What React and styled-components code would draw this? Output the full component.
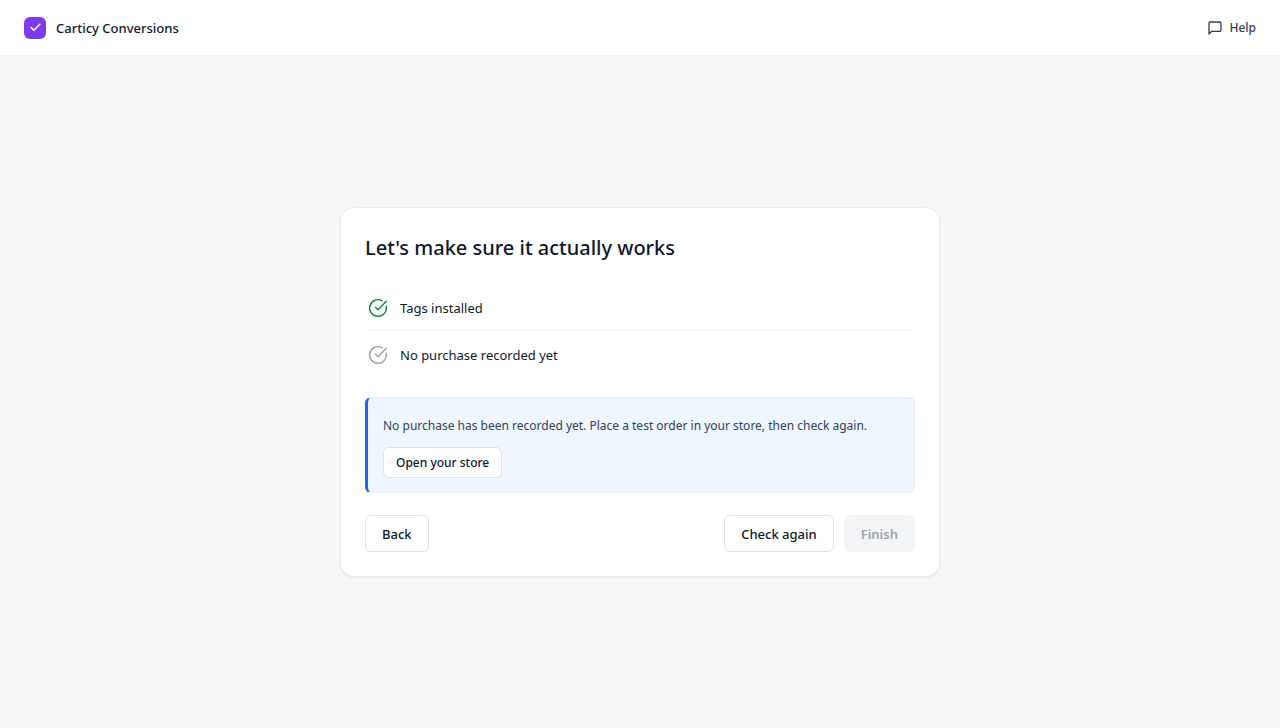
import React from 'react'
import styled, { createGlobalStyle } from 'styled-components'
import { Check, CircleCheckBig } from 'lucide-react'

const GlobalStyle = createGlobalStyle`
  * {
    box-sizing: border-box;
  }

  body {
    margin: 0;
    background: #f6f8f7;
    color: #0f172a;
    font-family: 'Segoe UI', 'Noto Sans', sans-serif;
    font-size: 13px;
  }
`

const Page = styled.div`
  display: flex;
  flex-direction: column;
  min-height: 100vh;
`

const Header = styled.header`
  display: flex;
  align-items: center;
  justify-content: space-between;
  height: 56px;
  padding: 0 24px;
  background: #fff;
  border-bottom: 1px solid #eff1f2;
`

const Brand = styled.div`
  display: flex;
  align-items: center;
  gap: 10px;
  font-size: 13px;
  font-weight: 500;
`

const Logo = styled.span`
  display: flex;
  align-items: center;
  justify-content: center;
  width: 22px;
  height: 22px;
  border-radius: 6px;
  background: #7c3aed;
  color: #fff;
`

const HelpLink = styled.a`
  display: flex;
  align-items: center;
  gap: 6px;
  color: #334155;
  font-size: 12px;
  font-weight: 500;
  text-decoration: none;
`

const Main = styled.main`
  display: flex;
  flex: 1;
  align-items: center;
  justify-content: center;
  padding: 24px;
`

const Card = styled.section`
  width: 100%;
  max-width: 600px;
  padding: 24px;
  background: #fff;
  border: 1px solid #eceeee;
  border-radius: 14px;
  box-shadow: 0 1px 2px rgba(15, 23, 42, 0.06);
`

const Title = styled.h1`
  margin: 0;
  font-size: 20px;
  font-weight: 500;
  line-height: 32px;
`

const Checklist = styled.ul`
  margin: 20px 0;
  padding: 0;
  list-style: none;
`

const CheckItem = styled.li`
  display: flex;
  align-items: center;
  gap: 12px;
  padding: 13px 3px 11px;
  font-size: 13px;
  line-height: 22px;

  & + & {
    border-top: 1px solid #eff1f2;
  }

  svg {
    color: ${({ $done }) => ($done ? '#15803d' : '#9ca3af')};
  }
`

const Notice = styled.div`
  padding: 18px 15px 14px;
  background: #eff6ff;
  border: 1px solid #e8eef8;
  border-left: 3px solid #2563eb;
  border-radius: 6px;
`

const NoticeText = styled.p`
  margin: 0 0 11px;
  color: #334155;
  font-size: 12px;
  line-height: 20px;
`

const Button = styled.button`
  height: ${({ $small }) => ($small ? '31px' : '37px')};
  padding: 0 ${({ $small }) => ($small ? '12px' : '16px')};
  background: #fff;
  border: 1px solid #dfe2e6;
  border-radius: 6px;
  color: #0f172a;
  font-family: inherit;
  font-size: ${({ $small }) => ($small ? '12px' : '13px')};
  font-weight: 500;
  cursor: pointer;

  &:disabled {
    background: #f3f4f6;
    border-color: #f3f4f6;
    color: #9ca3af;
    font-weight: 600;
    cursor: default;
  }
`

const Actions = styled.div`
  display: flex;
  justify-content: space-between;
  margin-top: 22px;
`

const ActionGroup = styled.div`
  display: flex;
  gap: 10px;
`

const MessageIcon = () => (
  <svg
    width="16"
    height="16"
    viewBox="0 0 24 24"
    fill="none"
    stroke="currentColor"
    strokeWidth="2"
    strokeLinecap="round"
    strokeLinejoin="round"
    aria-hidden="true"
  >
    <path d="M21 15a2 2 0 0 1-2 2H7l-4 4V5a2 2 0 0 1 2-2h14a2 2 0 0 1 2 2z" />
  </svg>
)

const steps = [
  { label: 'Tags installed', done: true },
  { label: 'No purchase recorded yet', done: false },
]

const App = () => {
  return (
    <Page>
      <GlobalStyle />
      <Header>
        <Brand>
          <Logo>
            <Check size={13} strokeWidth={3} />
          </Logo>
          Carticy Conversions
        </Brand>
        <HelpLink href="#help">
          <MessageIcon />
          Help
        </HelpLink>
      </Header>
      <Main>
        <Card>
          <Title>Let's make sure it actually works</Title>
          <Checklist>
            {steps.map(({ label, done }) => (
              <CheckItem key={label} $done={done}>
                <CircleCheckBig size={20} strokeWidth={1.75} />
                {label}
              </CheckItem>
            ))}
          </Checklist>
          <Notice>
            <NoticeText>
              No purchase has been recorded yet. Place a test order in your store, then check again.
            </NoticeText>
            <Button type="button" $small>Open your store</Button>
          </Notice>
          <Actions>
            <Button type="button">Back</Button>
            <ActionGroup>
              <Button type="button">Check again</Button>
              <Button type="button" disabled>Finish</Button>
            </ActionGroup>
          </Actions>
        </Card>
      </Main>
    </Page>
  )
}

export default App
